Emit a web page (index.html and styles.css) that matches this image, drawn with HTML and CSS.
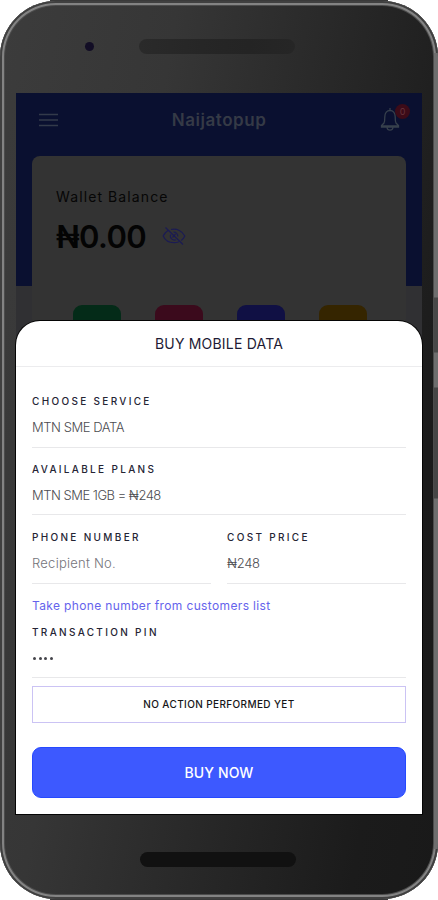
FILE: index.html
```html
<!DOCTYPE html>
<html lang="en">
<head>
<meta charset="utf-8">
<title>Naijatopup</title>
<link rel="stylesheet" href="styles.css">
</head>
<body>
<div class="phone">
  <div class="bezel-top"><span class="camera"></span><span class="speaker"></span></div>
  <div class="screen">
    <div class="app">
      <header class="bar">
        <svg class="menu" viewBox="0 0 20 14"><path d="M0 1.5h19M0 7h19M0 12.5h19"/></svg>
        <h1 class="brand">Naijatopup</h1>
        <div class="bell">
          <svg viewBox="0 0 22 26"><path d="M11 1v2M3.200 19h15.600M5 16c.8-1.500.8-3 .8-6 0-4 2.200-6.500 5.200-6.500s5.200 2.500 5.200 6.500c0 3 0 4.500.8 6l2.500 2.500v1.500h-17v-1.500zM8 20.500c.5 3.500 5.500 3.500 6 0"/></svg>
          <span class="badge">0</span>
        </div>
      </header>
      <section class="wallet">
        <p class="wallet-label">Wallet Balance</p>
        <div class="wallet-row">
          <span class="amount">₦0.00</span>
          <svg class="eye" viewBox="0 0 24 20"><path d="M6 4.500C3.800 6 2 8 1.200 10c2 4.500 6 6.700 10.800 6.700 1.800 0 3.400-.3 4.800-1M9 3.500c6-1.200 11.500 1.500 13.800 6.500-.8 1.800-2 3.300-3.600 4.500M3.500 1.500l17.500 17M8.700 8.500a4 4 0 0 0 5.300 5.200M11.500 6.200a4 4 0 0 1 4.300 4.300"/><path d="M10.500 11.500l3-3.500"/></svg>
        </div>
        <div class="tiles"><i class="tile green"></i><i class="tile red"></i><i class="tile blue"></i><i class="tile amber"></i></div>
      </section>
    </div>
    <div class="sheet">
      <h2 class="sheet-title"><span>BUY MOBILE DATA</span></h2>
      <div class="form">
        <div class="field"><label>CHOOSE SERVICE</label><p class="v1">MTN SME DATA</p></div>
        <div class="field"><label>AVAILABLE PLANS</label><p class="v2">MTN SME 1GB = ₦248</p></div>
        <div class="pair">
          <div class="field"><label>PHONE NUMBER</label><p class="v3">Recipient No.</p></div>
          <div class="field"><label>COST PRICE</label><p class="v4">₦248</p></div>
        </div>
        <a class="link">Take phone number from customers list</a>
        <div class="field pin"><label>TRANSACTION PIN</label><p class="dots"><i></i><i></i><i></i><i></i></p></div>
        <div class="status"><span>NO ACTION PERFORMED YET</span></div>
        <button class="buy"><span>BUY NOW</span></button>
      </div>
    </div>
  </div>
  <div class="bezel-bottom"><span class="home"></span></div>
</div>
</body>
</html>
```
FILE: styles.css
```css
* { box-sizing: border-box; margin: 0; padding: 0; }
/* The outer shell shows as thin strips along the four straight edges. */
body {
  width: 438px; height: 900px; overflow: hidden; font-family: Inter, "Noto Sans", sans-serif;
  background:
    linear-gradient(#3a3a3a, #3a3a3a) 50px 0 / 338px 2px no-repeat,
    linear-gradient(#3a3a3a, #3a3a3a) 50px 898px / 338px 2px no-repeat,
    linear-gradient(#3a3a3a, #3a3a3a) 0 50px / 2px 800px no-repeat,
    linear-gradient(#6c6c6c, #6c6c6c) 436px 50px / 2px 800px no-repeat,
    #fff;
}
.phone {
  position: relative; width: 438px; height: 898px; padding: 0 16px;
  display: flex; flex-direction: column; overflow: hidden;
  border-radius: 56px;
  background: linear-gradient(100deg, #3c3c3c 0%, #363636 30%, #272727 60%, #1b1b1b 85%, #191919 100%);
  box-shadow: inset 0 0 0 2px #404040, inset 0 0 0 4px #838383, inset 0 0 0 5px #4c4c4c;
}
body { padding-top: 1px; }
.phone::after {
  content: ""; position: absolute; right: 0; top: 52px; width: 4px; height: 796px;
  background: linear-gradient(#6e6e6e 244px, #484848 245px 299px, #6e6e6e 300px 334px, #464646 335px 445px, #6e6e6e 446px);
}
.bezel-top { height: 92px; flex: none; display: flex; padding-left: 69px; }
.camera { width: 9px; height: 9px; margin-top: 41px; border-radius: 50%; background: #120d25; }
.speaker { width: 156px; height: 15px; margin: 38px 0 0 45px; border-radius: 8px; background: linear-gradient(90deg, #2a2a2a, #262626 40%, #242424 70%, #262626); }
.screen { position: relative; height: 721px; flex: none; background: #303033; }
.app { height: 229px; padding: 0 16px; background: linear-gradient(#0a1030 193px, #303033 193px); overflow: hidden; }
.bar { height: 63px; display: flex; align-items: center; justify-content: space-between; padding: 0 0 9px 7px; }
.menu { width: 20px; height: 14px; fill: none; stroke: #333a4a; stroke-width: 1.6; }
.brand { font-size: 17px; font-weight: 600; color: #353a46; letter-spacing: .55px; }
.bell { position: relative; width: 27px; height: 27px; }
.bell svg { width: 22px; height: 26px; fill: none; stroke: #37404c; stroke-width: 1.3; }
.badge { position: absolute; left: 16px; top: -3px; width: 15px; height: 15px; border-radius: 50%; background: #3c0b18; color: #66323a; font-size: 9px; line-height: 15px; text-align: center; }
.wallet { height: 170px; border-radius: 8px; background: #333; padding: 31px 24px 0; }
.wallet-label { font-size: 14px; line-height: 20px; color: #060606; letter-spacing: 1.1px; }
.wallet-row { display: flex; align-items: center; height: 38px; margin-top: 10px; }
.amount { font-size: 31px; font-weight: 600; color: #040404; letter-spacing: -.6px; }
.eye { width: 24px; height: 20px; margin-left: 16px; fill: none; stroke: #1b1b54; stroke-width: 1.2; }
.tiles { display: flex; gap: 34px; margin: 50px 0 0 17px; }
.tile { width: 48px; height: 40px; border-radius: 9px; }
.green { background: #042b18; }
.red { background: #3b0a1c; }
.blue { background: #101044; }
.amber { background: #352500; }
.sheet { position: absolute; left: 0; right: 0; top: 228px; bottom: 0; background: #fff; border-radius: 24px 24px 0 0; box-shadow: 0 0 0 1px #050505; }
.sheet-title { height: 46px; border-bottom: 1px solid #ececee; font-size: 14px; font-weight: 400; color: #1e1b35; line-height: 46px; text-align: center; letter-spacing: .2px; }
.form { padding: 24px 16px 0; display: flex; flex-direction: column; }
.field { border-bottom: 1px solid #e8e8ea; display: flex; flex-direction: column; }
.field:first-child { height: 57px; margin-bottom: 11px; }
.form > .field:nth-child(2) { height: 56px; margin-bottom: 12px; }
.field label { font-size: 10px; line-height: 20px; font-weight: 500; letter-spacing: 2.320px; color: #252434; white-space: nowrap; }
.field p { font-size: 13px; line-height: 20px; margin-top: 6px; font-weight: 300; color: #4c4c50; white-space: nowrap; }
.field .v1 { letter-spacing: -.45px; }
.field .v2 { letter-spacing: -.5px; }
.field .v3 { letter-spacing: .25px; color: #74747a; }
.field .v4 { letter-spacing: -.3px; }
.pair { display: grid; grid-template-columns: 179px 179px; gap: 16px; }
.form .pair .field { height: 57px; margin: 0; }
.link { font-size: 12px; line-height: 20px; margin-top: 12px; color: #6563ec; white-space: nowrap; letter-spacing: .36px; }
.form > .pin { height: 56px; margin-top: 6px; }
.field .dots { display: flex; gap: 2.500px; align-items: center; height: 20px; padding-left: 1px; }
.dots i { width: 3px; height: 3px; border-radius: 50%; background: #44444a; }
.status { height: 37px; margin-top: 8px; border: 1px solid #cbc3f4; font-size: 10px; line-height: 34px; font-weight: 500; text-align: center; color: #151518; letter-spacing: .38px; }
.buy { height: 51px; margin-top: 24px; border: 1px solid #2549ff; border-radius: 9px; background: #3d59ff; color: #fff; font: 500 14px Inter, sans-serif; letter-spacing: .1px; }
.bezel-bottom { flex: 1; display: flex; justify-content: center; padding-top: 37px; border-top: 1px solid #050505; }
.home { width: 156px; height: 15px; margin-right: 2px; border-radius: 8px; background: #111; }
```
